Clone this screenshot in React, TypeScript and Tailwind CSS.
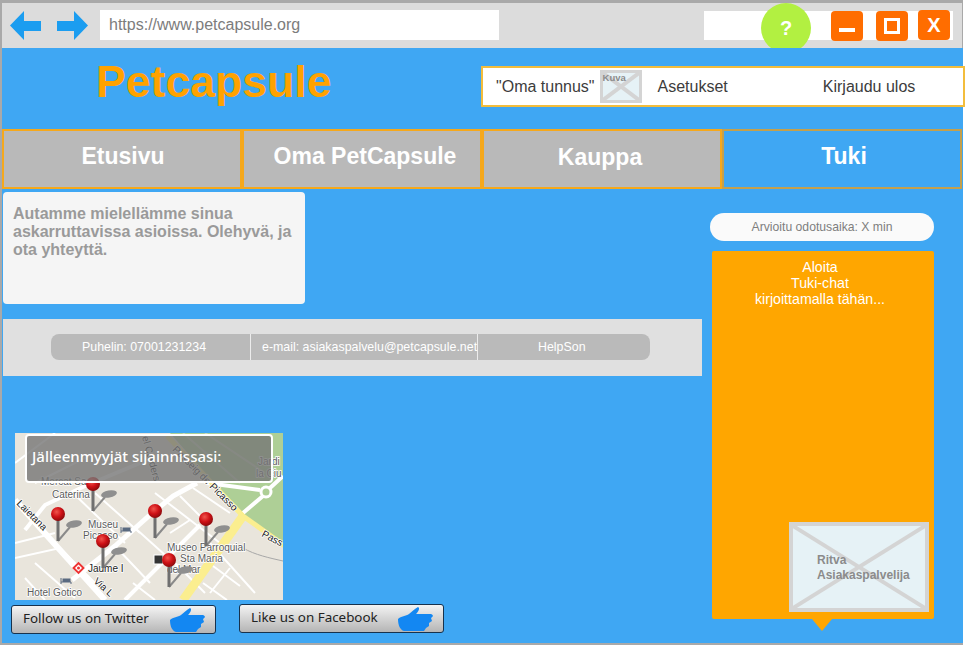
const sans = "font-['Liberation_Sans',Arial,sans-serif]";
const noto = "font-['Noto_Sans','Open_Sans',sans-serif]";

function Arrow({ flip }: { flip?: boolean }) {
  return (
    <svg width="31" height="29" viewBox="0 0 31 29" className={`mt-[1px] ${flip ? "-scale-x-100" : ""}`}>
      <polygon points="0,14.5 14,0 14,10 31,10 31,20 14,20 14,29" fill="#1b9df0" />
    </svg>
  );
}

// grey crossed box used as image placeholder
function Placeholder({ children, className }: { children?: React.ReactNode; className: string }) {
  return (
    <div className={`relative bg-[#e6f2f6] border-[4px] border-[#d4d4d4] ${className}`}>
      <svg className="absolute inset-0 w-full h-full" viewBox="0 0 100 100" preserveAspectRatio="none">
        <line x1="0" y1="0" x2="100" y2="100" stroke="#d4d4d4" strokeWidth="4" vectorEffect="non-scaling-stroke" />
        <line x1="100" y1="0" x2="0" y2="100" stroke="#d4d4d4" strokeWidth="4" vectorEffect="non-scaling-stroke" />
      </svg>
      {children}
    </div>
  );
}

function Tab({ label, active, className }: { label: string; active?: boolean; className: string }) {
  return (
    <div
      className={`w-[240px] h-[60px] border-[2px] flex justify-center text-white font-bold text-[23px] ${
        active ? "bg-[#3fa7f3] border-[#c4a04c]" : "bg-[#b9b9b9] border-[#f5a81c]"
      } ${className}`}
    >
      {label}
    </div>
  );
}

function Pin({ x, y }: { x: number; y: number }) {
  return (
    <g>
      <path d={`M${x} ${y + 27} L${x + 12} ${y + 13}`} stroke="#8a8a8a" strokeWidth="2" />
      <ellipse cx={x + 16} cy={y + 10} rx="8" ry="3.5" fill="#8f8f8f" transform={`rotate(-10 ${x + 16} ${y + 10})`} />
      <rect x={x - 1.5} y={y} width="3" height="27" fill="#6f6f6f" />
      <circle cx={x} cy={y} r="7" fill="url(#pinHead)" />
    </g>
  );
}

function Hotel({ x, y }: { x: number; y: number }) {
  return (
    <g stroke="#5a6a80" strokeWidth="1" fill="none">
      <path d={`M${x} ${y - 4} V${y + 2} M${x} ${y} H${x + 10} V${y + 2}`} />
      <rect x={x + 2} y={y - 3} width="7" height="2.5" fill="#5a6a80" />
    </g>
  );
}

function MapImage() {
  const label = {
    fontSize: 10,
    fill: "#5c5c5c",
    fontFamily: "'Liberation Sans', Arial, sans-serif",
    stroke: "#fff",
    strokeWidth: 1.5,
    paintOrder: "stroke",
  } as const;
  const dark = { ...label, fill: "#222" };
  return (
    <svg width="268" height="167" viewBox="0 0 268 167" className="block">
      <defs>
        <radialGradient id="pinHead" cx="40%" cy="35%" r="65%">
          <stop offset="0%" stopColor="#f0544c" />
          <stop offset="55%" stopColor="#cf1116" />
          <stop offset="100%" stopColor="#8e0a0c" />
        </radialGradient>
      </defs>
      <rect width="268" height="167" fill="#e9e5dc" />
      <polygon points="155,0 268,0 268,110 229,84" fill="#aecf96" />
      {/* small streets */}
      <g stroke="#fff" strokeWidth="2" fill="none">
        <path d="M0 110 L40 100 M0 125 L45 115 L80 150 M20 130 L60 165 M100 113 L135 150" />
        <path d="M120 95 L170 140 M140 60 L205 110 M165 63 L195 93 M178 55 L215 80" />
        <path d="M155 100 L175 87 M195 110 L240 160 M160 130 L190 160 M198 133 L225 153" />
        <path d="M188 150 L212 167 M0 30 L40 0 M20 50 L80 20 M58 60 L110 110 M80 60 L125 100" />
        <path d="M10 145 L30 167 M118 150 L140 167 M205 120 L180 150 M215 135 L195 160" />
        <path d="M168 0 L225 50 M190 0 L250 40" stroke="#c9d6bb" />
      </g>
      {/* main streets */}
      <g stroke="#fff" strokeWidth="5" fill="none">
        <path d="M0 67 L90 167" strokeWidth="6" />
        <path d="M10 97 L30 72 L70 53 L125 30" strokeWidth="4" />
        <path d="M57 147 L100 113 L135 82 L158 63 L182 50" />
        <path d="M192 50 L245 57 M228 80 L248 63 M255 55 L268 43" strokeWidth="4" />
        <path d="M110 167 L185 92" strokeWidth="4" />
      </g>
      <circle cx="251" cy="59" r="5" fill="#aecf96" stroke="#fff" strokeWidth="3" />
      <path d="M152 3 L228 83 L270 113" stroke="#fbee8f" strokeWidth="5" fill="none" />
      <path d="M228 83 L168 167" stroke="#fbee8f" strokeWidth="9" fill="none" />
      <path d="M228 115 C240 122 255 125 268 128" stroke="#a8a8a8" strokeWidth="1" fill="none" />

      <text x="26" y="52" {...label}>Mercat Sa</text>
      <text x="37" y="65" {...label}>Caterina</text>
      <text x="73" y="95" {...label}>Museu</text>
      <text x="68" y="106" {...label}>Picasso</text>
      <text x="152" y="118" {...label}>Museo Parroquial</text>
      <text x="165" y="129" {...label}>Sta Maria</text>
      <text x="152" y="140" {...label}>del Mar</text>
      <text x="73" y="139" {...dark}>Jaume I</text>
      <text x="12" y="163" {...label}>Hotel Gotico</text>
      <text x="1" y="71" {...dark} transform="rotate(45 1 71)">Laietana</text>
      <text x="78" y="149" {...dark} transform="rotate(42 78 149)">Via L</text>
      <text x="157" y="17" {...dark} transform="rotate(45 157 17)">Passeig de Picasso</text>
      <text x="246" y="103" {...dark} transform="rotate(28 246 103)">Pass</text>
      <text x="127" y="4" {...dark} transform="rotate(75 127 4)">el Carders</text>
      <text x="243" y="32" {...label}>Jardi</text>
      <text x="241" y="44" {...label}>la Ciu</text>

      <rect x="60" y="131.5" width="7" height="7" fill="#fff" stroke="#e33" strokeWidth="2" transform="rotate(45 63.5 135)" />
      <circle cx="63.5" cy="135" r="1.5" fill="#e33" />
      <Hotel x={106} y={98} />
      <Hotel x={46} y={149} />
      <rect x="139" y="122" width="9" height="9" fill="#333" stroke="#fff" />

      <Pin x={78} y={51} />
      <Pin x={43} y={81} />
      <Pin x={140} y={78} />
      <Pin x={191} y={86} />
      <Pin x={88} y={108} />
      <Pin x={154} y={127} />
    </svg>
  );
}

function Thumb() {
  return (
    <svg width="36" height="24" viewBox="0 0 36 24">
      <path
        d="M0 12 C3 9 8 9 11 7 C14 5 16 2 20 0 C22 1 21 4 18 7 L33 7 C36 8 35 10 33 11 L34 14 L31 16 L31 19 L28 21 L26 24 L6 24 C2 23 0 18 0 12 Z"
        fill="#1387f2"
      />
    </svg>
  );
}

function SocialButton({ label, className }: { label: string; className?: string }) {
  return (
    <div
      className={`w-[205px] h-[29px] rounded-[3px] border border-[#17324d] bg-gradient-to-b from-[#f4f4f4] to-[#b5b5b5] flex items-center justify-between pl-[11px] pr-[9px] text-[13.4px] text-[#222] ${noto} ${className ?? ""}`}
    >
      <span className="-mt-[3px]">{label}</span>
      <Thumb />
    </div>
  );
}

export default function App() {
  return (
    <div className={`relative w-[966px] h-[645px] overflow-hidden bg-white ${sans}`}>
      <div className="h-[645px] w-[963px] bg-[#a9a9a9] pt-[3px] pl-[2px]">
        {/* browser toolbar */}
        <div className="h-[45px] w-[960px] bg-[#dcdcdc] flex items-start pt-[7px] pl-[8px] relative">
          <Arrow />
          <div className="w-[16px]" />
          <Arrow flip />
          <div className="ml-[12px] w-[399px] h-[30px] bg-white flex items-center pl-[9px] text-[16px] text-[#7c7c7c]">
            https://www.petcapsule.org
          </div>
          <div className="ml-[205px] w-[249px] h-[29px] mt-[1px] bg-white" />
          <div className="absolute left-[759px] top-0 w-[50px] h-[50px] rounded-full bg-[#b2f041] flex items-center justify-center text-white font-bold text-[20px]">
            ?
          </div>
          <div className="absolute left-[829px] top-[8px] w-[32px] h-[30px] rounded-[4px] bg-[#ff6d00] flex items-end justify-center pb-[9px]">
            <div className="w-[16px] h-[4px] bg-white" />
          </div>
          <div className="absolute left-[874px] top-[8px] w-[32px] h-[30px] rounded-[4px] bg-[#ff6d00] flex items-center justify-center">
            <div className="w-[16px] h-[16px] border-[3px] border-white" />
          </div>
          <div className="absolute left-[916px] top-[7px] w-[32px] h-[30px] rounded-[4px] bg-[#ff6d00] flex items-center justify-center text-white font-bold text-[20px]">
            X
          </div>
        </div>

        {/* page */}
        <div className="h-[595px] bg-[#3fa7f3] w-[961px] relative">
          <div className="h-[81px] flex items-start">
            <div className="ml-[94px] w-[384px] mt-[6px] text-[44.6px] leading-[55px] font-bold text-[#ffa200]">Petcapsule</div>
            <div className="absolute left-[479px] top-[18px] w-[484px] h-[41px] bg-white border-[2px] border-[#f3bd3c] flex items-center text-[16px] text-[#3c3c3c]">
              <span className="ml-[13px]">"Oma tunnus"</span>
              <Placeholder className="ml-[5px] w-[42px] h-[33px] !border-[3px]">
                <span className="absolute left-[0px] top-[-2px] text-[9.5px] font-bold text-[#8a8a8a]">Kuva</span>
              </Placeholder>
              <span className="ml-[16px]">Asetukset</span>
              <span className="ml-[95px]">Kirjaudu ulos</span>
            </div>
          </div>

          <div className="flex">
            <Tab label="Etusivu" className="pt-[8px] pl-[2px]" />
            <Tab label="Oma PetCapsule" className="pt-[8px] pl-[6px]" />
            <Tab label="Kauppa" className="pt-[9px] pr-[4px]" />
            <Tab label="Tuki" active className="pt-[8px] pl-[4px]" />
          </div>

          <div className="flex">
            {/* left column */}
            <div className="w-[700px] shrink-0 ml-[1px]">
              <div className="mt-[3px] w-[302px] h-[112px] bg-[#f5f5f5] rounded-[4px] px-[10px] pt-[13px] text-[16px] leading-[18px] font-bold text-[#9a9a9a]">
                Autamme mielellämme sinua askarruttavissa asioissa. Olehyvä, ja ota yhteyttä.
              </div>
              <div className="mt-[15px] h-[57px] w-[699px] bg-[#e0e0e0] flex items-start pt-[15px] pl-[48px]">
                <div className="flex h-[26px] w-[599px] rounded-[8px] bg-[#bababa] overflow-hidden text-[12.4px] text-white">
                  <div className="w-[199px] flex items-center pl-[31px] whitespace-nowrap">Puhelin: 07001231234</div>
                  <div className="w-[228px] border-x border-[#ececec] flex items-center pl-[11px] whitespace-nowrap">
                    e-mail: asiakaspalvelu@petcapsule.net
                  </div>
                  <div className="flex-1 flex items-center pl-[60px]">HelpSon</div>
                </div>
              </div>
              <div className="relative mt-[57px] ml-[12px] w-[268px] h-[167px]">
                <MapImage />
                <div className={`absolute left-[10px] top-[1px] w-[248px] h-[49px] rounded-[4px] border-[2px] border-white bg-[#757575]/80 pl-[5px] pt-[9px] text-[15px] leading-[22px] font-medium text-white ${noto}`}>
                  Jälleenmyyjät sijainnissasi:
                </div>
              </div>
              <div className="flex items-start gap-[23px] ml-[8px] mt-[5px]">
                <SocialButton label="Follow us on Twitter" />
                <SocialButton label="Like us on Facebook" className="-mt-px" />
              </div>
            </div>

            {/* chat column */}
            <div className="ml-[7px] w-[224px] pt-[24px]">
              <div className="h-[28px] rounded-[14px] bg-[#fafafa] flex items-center justify-center text-[12.2px] text-[#7e7e7e]">
                Arvioitu odotusaika: X min
              </div>
              <div className="relative mt-[10px] ml-[2px] w-[222px] h-[368px] bg-[#ffa600] rounded-[2px] flex flex-col pt-[8px] pr-[6px] text-center text-[14.2px] leading-[16px] text-white">
                <div>Aloita</div>
                <div>Tuki-chat</div>
                <div>kirjoittamalla tähän...</div>
                <Placeholder className="mt-auto mb-[7px] ml-[77px] w-[140px] h-[90px] text-left">
                  <div className="absolute left-[24px] top-[27px] text-[12px] leading-[15px] font-bold text-[#8b8b8b]">
                    Ritva
                    <br />
                    Asiakaspalvelija
                  </div>
                </Placeholder>
                <div className="absolute left-[100px] top-[368px] w-0 h-0 border-x-[10px] border-x-transparent border-t-[12px] border-t-[#ffa600]" />
              </div>
            </div>
          </div>
        </div>
      </div>
    </div>
  );
}
